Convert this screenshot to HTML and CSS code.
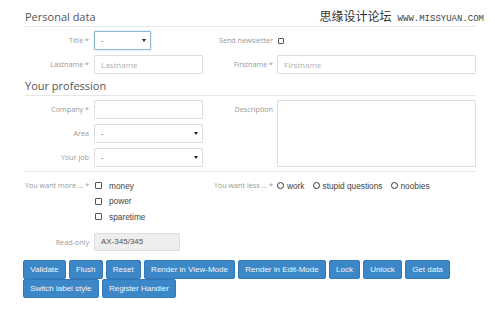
FILE: index.html
```html
<!DOCTYPE html>
<html lang="en">
<head>
    <meta charset="UTF-8">
    <meta name="viewport" content="width=device-width, initial-scale=1.0">
    <title>Form Demo</title>
    <link rel="stylesheet" href="styles.css">
</head>
<body>
    <div class="watermark">
        <span class="wm-cn">思缘设计论坛</span>
        <span class="wm-url">www.MISSYUAN.COM</span>
    </div>

    <div class="page">
        <h2 class="section-title">Personal data</h2>
        <div class="fields">
            <label class="lab-a">Title *</label>
            <div class="fld-a select title-select focused">
                <select><option>-</option></select>
            </div>
            <label class="lab-b">Send newsletter</label>
            <div class="fld-b check-cell"><span class="box"></span></div>

            <label class="lab-a">Lastname *</label>
            <input class="fld-a" type="text" placeholder="Lastname">
            <label class="lab-b">Firstname *</label>
            <input class="fld-b" type="text" placeholder="Firstname">
        </div>

        <h2 class="section-title second">Your profession</h2>
        <div class="fields">
            <label class="lab-a">Company *</label>
            <input class="fld-a" type="text">
            <label class="lab-b">Description</label>
            <textarea class="fld-b description"></textarea>

            <label class="lab-a">Area</label>
            <div class="fld-a select">
                <select><option>-</option></select>
            </div>

            <label class="lab-a">Your job</label>
            <div class="fld-a select">
                <select><option>-</option></select>
            </div>
        </div>

        <div class="separator"></div>

        <div class="fields choices">
            <label class="lab-a">You want more ... *</label>
            <div class="fld-a options">
                <div class="opt"><span class="box"></span>money</div>
                <div class="opt"><span class="box"></span>power</div>
                <div class="opt"><span class="box"></span>sparetime</div>
            </div>
            <label class="lab-b">You want less ... *</label>
            <div class="fld-b radios">
                <div class="opt"><span class="dot"></span>work</div>
                <div class="opt"><span class="dot"></span>stupid questions</div>
                <div class="opt"><span class="dot"></span>noobies</div>
            </div>
        </div>

        <div class="fields readonly-row">
            <label class="lab-a">Read-only</label>
            <input class="fld-a readonly" type="text" value="AX-345/345" readonly>
        </div>

        <div class="buttons">
            <button>Validate</button>
            <button>Flush</button>
            <button>Reset</button>
            <button>Render in View-Mode</button>
            <button>Render in Edit-Mode</button>
            <button>Lock</button>
            <button>Unlock</button>
            <button>Get data</button>
            <button>Switch label style</button>
            <button>Register Handler</button>
        </div>
    </div>
</body>
</html>
```

FILE: styles.css
```css
body {
    margin: 0;
    background-color: #fff;
    font-family: "Open Sans", Arial, sans-serif;
    color: #555;
}
.page {
    position: relative;
    width: 451px;
    padding: 10px 0 0 25px;
}
.watermark {
    position: absolute;
    top: 7px;
    right: 11px;
    display: flex;
    align-items: baseline;
    gap: 6px;
    z-index: 2;
}
.wm-cn {
    font-family: "Noto Sans CJK SC", sans-serif;
    font-size: 12px;
    color: #333;
}
.wm-url {
    font-family: "Liberation Mono", monospace;
    font-size: 9px;
    text-transform: uppercase;
    color: #444;
}
.section-title {
    margin: 0 0 4px;
    padding-bottom: 2px;
    font-size: 11px;
    line-height: 14px;
    font-weight: normal;
    color: #555;
    border-bottom: 1px solid #e6e6e6;
}
.section-title.second {
    margin-top: 5px;
}
.fields {
    display: grid;
    grid-template-columns: 69px 109px 74px 199px;
    grid-auto-rows: 19px;
    row-gap: 5px;
}
.lab-a, .lab-b {
    font-size: 7.2px;
    line-height: 19px;
    color: #999;
    text-align: right;
    white-space: nowrap;
}
.lab-a {
    grid-column: 1;
    padding-right: 5px;
}
.lab-b {
    grid-column: 3;
    padding-right: 4px;
}
.fld-a {
    grid-column: 2;
}
.fld-b {
    grid-column: 4;
}
input, textarea, select {
    box-sizing: border-box;
    margin: 0;
    height: 19px;
    padding: 0 6px;
    font-family: "Open Sans", Arial, sans-serif;
    font-size: 8px;
    color: #555;
    border: 1px solid #dedede;
    border-radius: 1px;
    background-color: #fff;
    outline: none;
}
input::placeholder {
    color: #b0b0b0;
}
.description {
    grid-row: 1 / 4;
    height: 67px;
    resize: none;
}
.select {
    position: relative;
}
.select select {
    display: block;
    width: 100%;
    padding: 0 6px 3px;
    appearance: none;
    -webkit-appearance: none;
}
.select::after {
    content: "";
    position: absolute;
    right: 5px;
    top: 8px;
    border-left: 2px solid transparent;
    border-right: 2px solid transparent;
    border-top: 3px solid #222;
}
.title-select {
    width: 57px;
}
.focused select {
    border-color: #8fbad6;
    box-shadow: 0 0 2px rgba(102, 175, 233, 0.6);
}
.check-cell {
    display: flex;
    align-items: center;
    padding-left: 1px;
}
.box {
    box-sizing: border-box;
    width: 6px;
    height: 6px;
    border: 1px solid #555;
    border-radius: 1px;
}
.separator {
    margin-top: 4px;
    border-top: 1px solid #e6e6e6;
}
.choices {
    margin-top: 6px;
    grid-auto-rows: auto;
}
.choices .lab-a, .choices .lab-b {
    line-height: 15.5px;
}
.opt {
    display: flex;
    align-items: center;
    height: 15.5px;
    font-family: "Liberation Sans", Arial, sans-serif;
    font-size: 8.3px;
    color: #444;
}
.options .opt {
    gap: 7px;
    padding-left: 1px;
}
.options .box {
    width: 7px;
    height: 7px;
}
.radios {
    display: flex;
    gap: 8px;
}
.radios .opt {
    gap: 3px;
}
.dot {
    box-sizing: border-box;
    width: 7px;
    height: 7px;
    border: 1.5px solid #333;
    border-radius: 50%;
}
.readonly-row {
    margin-top: 8px;
    grid-auto-rows: 18px;
}
.readonly-row .lab-a {
    line-height: 18px;
}
.readonly {
    width: 86px;
    height: 18px;
    background-color: #eee;
    font-family: "Liberation Sans", Arial, sans-serif;
    color: #555;
}
.buttons {
    display: flex;
    flex-wrap: wrap;
    column-gap: 3px;
    margin: 9px 0 0 -2px;
    width: 460px;
}
button {
    height: 19px;
    padding: 0 6.2px;
    font-family: "Liberation Sans", Arial, sans-serif;
    font-size: 8px;
    color: #f2f7fc;
    background-color: #3b87c8;
    border: 1px solid #3479b8;
    border-radius: 2px;
    cursor: pointer;
}
button:hover {
    background-color: #3278b5;
}
```
